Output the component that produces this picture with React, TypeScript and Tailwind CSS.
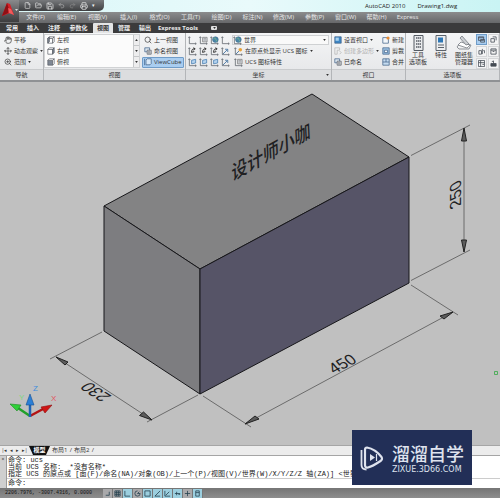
import React from 'react';
import clsx from 'clsx';
import {
  File,
  FolderOpen,
  Hand,
  Move,
  Printer,
  Redo2,
  Save,
  Search,
  Undo2,
  ZoomIn,
} from 'lucide-react';

const MENUS = [
  '文件(F)',
  '编辑(E)',
  '视图(V)',
  '插入(I)',
  '格式(O)',
  '工具(T)',
  '绘图(D)',
  '标注(N)',
  '修改(M)',
  '参数(P)',
  '窗口(W)',
  '帮助(H)',
];

const TABS = ['常用', '插入', '注释', '参数化', '视图', '管理', '输出', 'Express Tools'];

const TAB_WIDTHS = ['w-[20px]', 'w-[20px]', 'w-[20px]', 'w-[27px]', 'w-[20px]', 'w-[20px]', 'w-[20px]', 'w-[44px]'];

type UcsKind = 'plain' | 'sheet' | 'globe' | 'turn' | 'face' | 'axis' | 'origin';

const UCS_ROWS: UcsKind[][] = [
  ['plain', 'sheet', 'globe', 'plain', 'globe'],
  ['turn', 'turn', 'turn', 'axis', 'origin'],
  ['face', 'face', 'face', 'axis', 'sheet'],
];

const UcsIcon: React.FC<{ kind: UcsKind }> = ({ kind }) => (
  <svg viewBox="0 0 10 10" className="size-[9px] shrink-0" fill="none">
    <path d="M1.5 1v7.5H9M.5 2l1-1.2 1 1.2M8 7.5l1.2 1L8 9.5" stroke="#555a62" strokeWidth=".8" />
    {kind === 'sheet' && (
      <>
        <path d="M4 1.5h5v5H4z" fill="#dfe3e8" stroke="#666" strokeWidth=".7" />
        <path d="M5 3h3M5 4.5h3" stroke="#666" strokeWidth=".6" />
      </>
    )}
    {kind === 'globe' && (
      <>
        <circle cx="6" cy="4" r="3.2" fill="#4a86a8" stroke="#2d5a78" strokeWidth=".5" />
        <path d="M4 3c1-1 2-1 2 0s2 1 1 3" stroke="#7dbb8a" strokeWidth="1" />
      </>
    )}
    {kind === 'turn' && (
      <path d="M4 6c0-3 1-4 3-4M6 .8 8 2 6 3.5M4 6l3-1" stroke="#222" strokeWidth="1" />
    )}
    {kind === 'face' && (
      <path d="M4 2.5 8.5 1.5v4L4 6.5z" fill="#b5d3ee" stroke="#3c76ad" strokeWidth=".8" />
    )}
    {kind === 'axis' && (
      <path d="m2 8 5-5M4.5 2.5h3v3" stroke="#37699a" strokeWidth=".9" />
    )}
    {kind === 'origin' && (
      <>
        <path d="m2 8 4-4" stroke="#37699a" strokeWidth=".9" />
        <circle cx="7" cy="3" r="2" fill="#e8a33c" />
      </>
    )}
  </svg>
);

const CubeIcon: React.FC<{ face: 'left' | 'right' | 'front' }> = ({ face }) => (
  <svg viewBox="0 0 10 10" className="size-[8px] shrink-0" stroke="#4e545c" strokeWidth=".8">
    <path d="M1 3h6v6H1z" fill={face === 'front' ? '#7f8894' : '#fff'} />
    <path d="m1 3 2-2h6L7 3z" fill="#fff" />
    <path d="m7 3 2-2v6L7 9z" fill={face === 'right' ? '#7f8894' : '#fff'} />
    {face === 'left' && <path d="m1 3 2-2v6L1 9z" fill="#7f8894" />}
  </svg>
);

type ViewportKind = 'set' | 'poly' | 'named' | 'new' | 'clip' | 'join' | 'cube';

const ViewportIcon: React.FC<{ kind: ViewportKind }> = ({ kind }) => (
  <svg viewBox="0 0 10 10" className="size-[8px] shrink-0" fill="none" stroke="#3d5f86" strokeWidth=".9">
    {kind === 'set' && (
      <>
        <path d="M1 1h8v8H1z" fill="#3d86c6" />
        <path d="M2 2h4v4H2z" fill="#a8d2ef" stroke="none" />
      </>
    )}
    {kind === 'poly' && <path d="M1 1h6v3H4v5H1zM7 5l2 2-2 2" stroke="#b4b4b4" />}
    {kind === 'named' && (
      <>
        <path d="M1 1h6v5H1z" fill="#dbe6f0" />
        <path d="M4 4h5v5H4zM5 6h3M5 7.5h3" fill="#f6f6f6" stroke="#4f5660" />
      </>
    )}
    {kind === 'new' && (
      <>
        <path d="M1 2h7v7H1z" fill="#f2f6fa" />
        <circle cx="7.5" cy="2.5" r="2" fill="#e88b31" stroke="none" />
      </>
    )}
    {kind === 'clip' && (
      <>
        <path d="M1 1h8v8H1z" fill="#9fc3e4" />
        <path d="M3 4h4v3H3z" fill="#f3f6fa" />
      </>
    )}
    {kind === 'join' && (
      <>
        <path d="M1 1h8v8H1z" fill="#c6dcf0" />
        <path d="M1 5h8M5 1v4" />
      </>
    )}
    {kind === 'cube' && <path d="M2.5 2.5 4 1h5v6L7.5 8.5h-5zM.5 1.5v7M.5 1.5h1M.5 8.5h1" fill="#d9e9f8" />}
  </svg>
);

const Caret: React.FC<{ className?: string }> = ({ className }) => (
  <svg viewBox="0 0 4 3" className={clsx('h-[2px] w-[3px] shrink-0', className)}>
    <path d="M0 0h4L2 3z" fill="#333" />
  </svg>
);

interface ToolProps {
  icon: React.ReactNode;
  label: string;
  caret?: boolean;
  active?: boolean;
  disabled?: boolean;
}

const Tool: React.FC<ToolProps> = ({ icon, label, caret, active, disabled }) => (
  <button
    disabled={disabled}
    className={clsx(
      'flex h-[11px] items-center gap-[2px] whitespace-nowrap border px-px',
      active ? 'rounded-[1px] border-[#6f9cc8] bg-[#a9cdf0]' : 'border-transparent',
      disabled && 'text-[#b2b2b2]'
    )}
  >
    {icon}
    <span>{label}</span>
    {caret && <Caret />}
  </button>
);

interface PanelProps {
  title: string;
  className?: string;
  menu?: boolean;
  children: React.ReactNode;
}

const Panel: React.FC<PanelProps> = ({ title, className, menu, children }) => (
  <section className={clsx('flex flex-col border-r border-[#b3b5b8]', className)}>
    <div className="flex h-[36px] items-center overflow-hidden">{children}</div>
    <h2 className="relative flex h-[11px] items-center justify-center border-t border-[#c9cbcd] bg-[#dcdddf] text-[6px]">
      {title}
      {menu && <Caret className="absolute right-[2px]" />}
    </h2>
  </section>
);

const TitleBar = () => (
  <header className="flex h-[12px] items-start bg-linear-to-r from-[#d9f7f8] via-[#e9fafb] to-[#c9f4f4]">
    <div className="flex h-[11px] w-[104px] shrink-0 items-center gap-[4px] rounded-br-[5px] bg-linear-to-b from-[#77797c] to-[#3e3f41] pl-[24px] text-[#f1f1f1]">
      <File size={7} />
      <FolderOpen size={7} />
      <Save size={8} />
      <Undo2 size={7} className="text-[#b5b5b5]" />
      <Redo2 size={7} className="text-[#8d8d8d]" />
      <Printer size={8} />
      <span className="text-[5px]">▾</span>
    </div>
    <div className="h-full flex-1" />
    <h1 className="flex h-full w-[135px] shrink-0 items-center gap-[12px] whitespace-nowrap text-[6px] text-[#222]">
      <span>AutoCAD 2010</span>
      <span>Drawing1.dwg</span>
    </h1>
  </header>
);

const AppButton = () => (
  <button
    aria-label="AutoCAD"
    className="absolute left-0 top-0 z-10 h-[22px] w-[19px] bg-linear-to-b from-[#8a8a8c] to-[#3c3c3e]"
  >
    <svg viewBox="0 0 19 22" className="size-full">
      <path d="M2 16 7 3l3 1 4 11-4-2z" fill="#d61f26" />
      <path d="M7 3 2 16l6-3 1-4z" fill="#8f1015" />
      <path d="m8 8 1 5 5 2-3-6z" fill="#f2595b" />
      <path d="M15 9h3l-1.5 2z" fill="#ddd" />
    </svg>
  </button>
);

const MenuBar = () => (
  <nav className="flex h-[11px] items-center bg-linear-to-b from-[#8b8c8d] to-[#67686a] pl-[20px] text-[6px] text-[#e9e9e9]">
    {MENUS.map((menu) => (
      <button key={menu} className="w-[31px] whitespace-nowrap text-center">
        {menu}
      </button>
    ))}
    <button className="w-[31px] whitespace-nowrap text-center">Express</button>
  </nav>
);

const RibbonTabs = () => (
  <nav className="flex h-[10px] items-end gap-[1px] bg-[#3b3b3c] pl-[2px] text-[6px] font-bold text-[#ececec]">
    {TABS.map((tab, i) => (
      <button
        key={tab}
        className={clsx(
          'flex h-[10px] items-center justify-center whitespace-nowrap',
          TAB_WIDTHS[i],
          tab === '视图' && 'rounded-t-[1px] bg-[#e4e5e6] text-[#333]'
        )}
      >
        {tab}
      </button>
    ))}
    <button aria-label="最小化" className="ml-[10px] flex h-[10px] items-center">
      <span className="flex h-[4px] w-[6px] items-center justify-center rounded-[1px] bg-[#e0e0e0]">
        <Caret />
      </span>
    </button>
  </nav>
);

const Ribbon = () => (
  <div className="flex shrink-0 overflow-hidden border-b-2 border-[#8f9194] bg-linear-to-b from-[#f4f5f6] to-[#e4e5e7] text-[6px] text-[#333]">
    <Panel title="导航" className="w-[44px] shrink-0">
      <div className="flex flex-col pl-[2px]">
        <Tool icon={<Hand size={8} />} label="平移" />
        <Tool icon={<Move size={8} />} label="动态观察" caret />
        <Tool icon={<ZoomIn size={8} />} label="范围" caret />
      </div>
    </Panel>

    <Panel title="视图" className="w-[142px] shrink-0">
      <div className="flex h-[34px] w-[96px] justify-between border border-[#d0d2d4] bg-[#fbfbfb]">
        <div className="flex flex-col justify-center">
          <Tool icon={<CubeIcon face="left" />} label="左视" />
          <Tool icon={<CubeIcon face="right" />} label="右视" />
          <Tool icon={<CubeIcon face="front" />} label="俯视" />
        </div>
        <div className="flex w-[6px] flex-col divide-y divide-[#c5c7c9] border-l border-[#c5c7c9] bg-[#ededee]">
          <button aria-label="上" className="flex flex-1 items-center justify-center">
            <Caret className="rotate-180" />
          </button>
          <button aria-label="下" className="flex flex-1 items-center justify-center">
            <Caret />
          </button>
          <button aria-label="更多" className="flex flex-1 items-center justify-center">
            <Caret />
          </button>
        </div>
      </div>
      <div className="flex flex-col pl-[2px]">
        <Tool icon={<Search size={8} />} label="上一视图" />
        <Tool icon={<ViewportIcon kind="named" />} label="命名视图" />
        <Tool icon={<ViewportIcon kind="cube" />} label="ViewCube" active />
      </div>
    </Panel>

    <Panel title="坐标" menu className="w-[146px] shrink-0">
      <div className="flex w-full flex-col px-[2px]">
        {UCS_ROWS.map((row, i) => (
          <div key={i} className="flex h-[11px] items-center gap-[2px]">
            {row.slice(0, 4).map((kind, j) => (
              <button key={j} aria-label={`UCS ${i + 1}.${j + 1}`}>
                <UcsIcon kind={kind} />
              </button>
            ))}
            {i === 0 && (
              <button className="flex h-[10px] flex-1 items-center gap-[2px] border border-[#cfd1d3] bg-[#f9f9f9] pr-[2px]">
                <UcsIcon kind={row[4]} />
                <span>世界</span>
                <Caret className="ml-auto" />
              </button>
            )}
            {i === 1 && <Tool icon={<UcsIcon kind={row[4]} />} label="在原点处显示 UCS 图标" caret />}
            {i === 2 && <Tool icon={<UcsIcon kind={row[4]} />} label="UCS 图标特性" />}
          </div>
        ))}
      </div>
    </Panel>

    <Panel title="视口" className="w-[74px] shrink-0">
      <div className="flex w-[48px] shrink-0 flex-col">
        <Tool icon={<ViewportIcon kind="set" />} label="设置视口" caret />
        <Tool icon={<ViewportIcon kind="poly" />} label="创建多边形" disabled caret />
        <Tool icon={<ViewportIcon kind="named" />} label="已命名" />
      </div>
      <div className="flex flex-col">
        <Tool icon={<ViewportIcon kind="new" />} label="新建" />
        <Tool icon={<ViewportIcon kind="clip" />} label="剪裁" />
        <Tool icon={<ViewportIcon kind="join" />} label="合并" />
      </div>
    </Panel>

    <Panel title="选项板" className="min-w-[94px] flex-1">
      <button className="flex h-[33px] w-[24px] flex-col items-center gap-px text-center leading-[7px]">
        <svg viewBox="0 0 16 16" className="size-[16px] shrink-0" stroke="#555b63">
          <path d="M4 .5h9v15H4z" fill="#e9ebed" />
          <path d="M6 3h5M6 6h5M6 9h5M6 12h5" strokeDasharray="1.5 .5" strokeWidth="1.5" />
        </svg>
        工具
        <br />
        选项板
      </button>
      <button className="flex h-[33px] w-[22px] flex-col items-center gap-px text-center leading-[7px]">
        <svg viewBox="0 0 16 16" className="size-[16px] shrink-0" fill="none" stroke="#5b626b">
          <path d="M3 .5h10v15H3z" fill="#eceef0" />
          <path d="M5 2.5h5v5H5z" fill="#2e77b5" stroke="none" />
          <path d="M5 10h6M5 12.5h6" />
        </svg>
        特性
      </button>
      <button className="flex h-[33px] w-[24px] flex-col items-center gap-px text-center leading-[7px]">
        <svg viewBox="0 0 16 16" className="size-[16px] shrink-0" stroke="#777c83" strokeWidth=".8">
          <path d="m1 12 3-4 11 2-2 4H3z" fill="#eff0f1" />
          <path d="m2 10 3-3 9 3-3 3z" fill="#fff" />
          <path d="m4 3 2-2 7 8-3 1z" fill="#cdd0d4" />
        </svg>
        图纸集
        <br />
        管理器
      </button>
      <div className="grid grid-cols-2 gap-px">
        {['命令行', '标记集', '快速计算', '表', '设计中心', '外部'].map((name, i) => (
          <button
            key={name}
            aria-label={name}
            className={clsx(
              'flex size-[11px] items-center justify-center border',
              i === 0 ? 'border-[#6f9cc8] bg-[#a9cdf0]' : 'border-[#d5d6d8] bg-[#f4f4f5]'
            )}
          >
            <svg viewBox="0 0 8 8" className="size-[7px]" fill="none" stroke="#454b54" strokeWidth=".9">
              {i === 0 && <path d="M.5 1h6v4h-6zM.5 2h6M3 4h4.5v3H3z" />}
              {i === 1 && <path d="M1 3h4v4H1zM3 1h4v4" />}
              {i === 2 && <path d="M1 3h3v4H1zM5 1v6M6 3h1.5v3" />}
              {i === 3 && <path d="M1 1h6v6H1zM1 2.5h6M3 4h2" />}
              {i === 4 && <path d="M.5.5h7v7h-7zM.5 3h7M3 .5v7M5 5h2" />}
              {i === 5 && <path d="M1 4h6v3H1zM4 1v3M2 2l2-1" fill="#454b54" />}
            </svg>
          </button>
        ))}
      </div>
    </Panel>
  </div>
);

// Coordinates are drawing units, with the top left corner of the viewport at 0,82
const Drawing = () => (
  <svg viewBox="0 82 500 363" className="min-h-0 w-full flex-1 bg-[#c0c0c0]" role="img" aria-label="450 × 230 × 250">
    <g stroke="#17171a" strokeWidth="1" strokeLinejoin="round">
      <path d="M104 206 312 94l97 63-209 112z" fill="#838384" />
      <path d="m104 206 96 63v125l-96-63z" fill="#7d7d80" />
      <path d="m200 269 209-112v126L200 394z" fill="#565467" />
    </g>

    <g stroke="#555" strokeWidth=".8" fill="none">
      <path d="M411 155.5 470 125M411 280.5 470 250M464 128v124" />
      <path d="m102 332-52 27M198 395l-51 27M56 357l96 63" />
      <path d="m203 396 48 31M411 285l47 30M245 424l208-112" />
    </g>
    <g stroke="#222" strokeWidth="1" fill="#5c5c5c">
      <path d="m464 128-2.5 13h5zM464 252l-2.5-12h5z" />
      <path d="m56 357 12 5-3 3zM152 420l-8.5-8-4 3.5z" />
      <path d="m245 424 14-5-4-3zM453 312l-9 7-4-3z" />
    </g>

    <g fill="#202022" fontFamily="'Liberation Sans', sans-serif" fontSize="16" textAnchor="middle">
      <text transform="translate(461 192) rotate(-90) skewX(28)">250</text>
      <text transform="translate(346 368) rotate(-28) skewX(14)">450</text>
      <text transform="translate(101 389) rotate(213) skewX(-28)">230</text>
    </g>
    <text
      transform="translate(232 181) rotate(-29) skewX(-26)"
      fill="#202022"
      fontFamily="'Noto Sans CJK SC', sans-serif"
      fontSize="18"
      fontWeight="500"
    >
      设计师小咖
    </text>

    <g strokeWidth="2.5">
      <path d="m30 416-12-8" stroke="#22a02a" />
      <path d="m10 404 11 1-4 6z" fill="#2fd038" stroke="#1d8a24" strokeWidth=".6" />
      <path d="m30 416 13-7" stroke="#b31313" />
      <path d="m52 405-11 2 4 6z" fill="#cf1515" stroke="#8d0d0d" strokeWidth=".6" />
      <path d="M30 417v-13" stroke="#1e62b4" />
      <path d="m30 394-4 11h8z" fill="#2b7fd6" stroke="#184f92" strokeWidth=".6" />
    </g>
    <g fontFamily="'Liberation Sans', sans-serif" fontSize="8">
      <text x="33" y="391" fill="#3d8ede">Z</text>
      <text x="51" y="401" fill="#e05560">X</text>
      <text x="19" y="400" fill="#7ed67e">Y</text>
    </g>
    <path d="M494.5 371.5h3v3h-3z" fill="none" stroke="#35a845" strokeWidth=".8" />
  </svg>
);

const LayoutTabs = () => (
  <nav className="flex h-[11px] shrink-0 items-center border-y border-[#a5a5a5] bg-[#ececec] text-[6px] text-[#333]">
    <div className="flex w-[29px] justify-around text-[5px]">
      <button aria-label="第一个">|◂</button>
      <button aria-label="上一个">◂</button>
      <button aria-label="下一个">▸</button>
      <button aria-label="最后一个">▸|</button>
    </div>
    <button className="relative flex h-full w-[21px] items-center justify-center font-bold text-white">
      <svg viewBox="0 0 21 9" className="absolute inset-0 size-full" preserveAspectRatio="none">
        <path d="M0 0h21l-4 9H4z" fill="#111" />
      </svg>
      <span className="relative">模型</span>
    </button>
    <button className="flex w-[22px] justify-between whitespace-nowrap pl-[2px]">
      布局1<span>/</span>
    </button>
    <button className="flex w-[22px] justify-between whitespace-nowrap pl-[2px]">
      布局2<span>/</span>
    </button>
  </nav>
);

const CommandWindow = () => (
  <section className="flex shrink-0 bg-white text-[7px] leading-[7px] text-[#222]">
    <div className="w-[7px] shrink-0 border-r border-[#999] bg-[#cfcfcf] text-center text-[5px]">×</div>
    <div className="min-w-0 flex-1 overflow-hidden whitespace-pre pt-px font-['Liberation_Mono','Noto_Sans_CJK_SC',monospace]">
      <p className="pl-px">命令: ucs</p>
      <p className="pl-px">当前 UCS 名称:  *没有名称*</p>
      <p className="pl-px">指定 UCS 的原点或 [面(F)/命名(NA)/对象(OB)/上一个(P)/视图(V)/世界(W)/X/Y/Z/Z 轴(ZA)] &lt;世界&gt;:</p>
      <label className="flex h-[10px] items-center border-t border-[#ccc] pl-px">
        命令:
        <input aria-label="命令" className="ml-1 h-[8px] min-w-0 flex-1 bg-transparent outline-none" />
      </label>
    </div>
  </section>
);

const STATUS_ICONS = [
  { name: '捕捉', on: false, d: 'M2 6h4V2' },
  { name: '栅格', on: false, d: 'M1 1h6v6H1zM3 1v6M5 1v6M1 3h6M1 5h6' },
  { name: '正交', on: true, d: 'M1 1v6h6' },
  { name: '极轴', on: false, d: 'M7 4a3 3 0 1 1-3-3M4 4h3M4 4l2-2' },
  { name: '对象捕捉', on: true, d: 'M1 1h6v6H1z' },
  { name: '对象追踪', on: true, d: 'M7 1 1 7h6' },
  { name: '动态 UCS', on: true, d: 'M1 1v6h6M2 6l4-4' },
  { name: '动态输入', on: true, d: 'M1 4h6M3 2v4M5 5h2' },
  { name: '线宽', on: false, d: 'M4 1v6M1 4h6' },
  { name: '快捷特性', on: true, d: 'M2 1h4v6H2zM2 3h4' },
];

const StatusBar = () => (
  <footer className="flex h-[10px] shrink-0 items-center border-t border-[#777] bg-linear-to-b from-[#777] to-[#8d8d8d]">
    <span className="w-[103px] whitespace-nowrap pl-[5px] font-['Liberation_Mono',monospace] text-[5px] text-[#111]">
      2206.7976, -3007.4316, 0.0000
    </span>
    {STATUS_ICONS.map(({ name, on, d }) => (
      <button
        key={name}
        aria-label={name}
        className={clsx(
          'flex h-full w-[10px] items-center justify-center border-r border-[#777]',
          on ? 'bg-[#9ccfdf]' : 'bg-[#a9a9ab]'
        )}
      >
        <svg viewBox="0 0 8 8" className="size-[7px]" fill="none" stroke="#24404e" strokeWidth=".9">
          <path d={d} />
        </svg>
      </button>
    ))}
  </footer>
);

const Watermark = () => (
  <aside className="absolute bottom-[13px] right-[28px] flex h-[55px] w-[120px] items-center gap-[8px] bg-[#222f57] pl-[8px] text-[#dfe3ee]">
    <svg viewBox="0 0 24 26" className="h-[26px] w-[24px] shrink-0" fill="none" stroke="currentColor">
      <path d="M7 2.5c6 1 11 5 14.5 9.5 1 1.5.5 3-1 4C16 19 12 21.5 8 22.5c-2 .5-3-.5-3-2.5V5c0-1.5.5-2.5 2-2.5z" strokeWidth="2.2" />
      <path d="M1.5 5v15c0 3 2 4.5 5 4.5" strokeWidth="1.8" />
      <path d="m10 9 5 3.5-5 3.5z" fill="currentColor" stroke="none" />
      <path d="M16.5 9v7" strokeWidth="1.2" />
    </svg>
    <div className="whitespace-nowrap">
      <p className="text-[18px] font-medium leading-[24px]">溜溜自学</p>
      <p className="font-['DejaVu_Sans',sans-serif] text-[8px] leading-[8px]">ZIXUE.3D66.COM</p>
    </div>
  </aside>
);

export default function App() {
  return (
    <main className="relative flex h-screen min-h-[400px] flex-col overflow-hidden bg-[#c0c0c0] font-['Open_Sans','Noto_Sans_CJK_SC',sans-serif]">
      <AppButton />
      <TitleBar />
      <MenuBar />
      <RibbonTabs />
      <Ribbon />
      <Drawing />
      <LayoutTabs />
      <CommandWindow />
      <StatusBar />
      <Watermark />
    </main>
  );
}
